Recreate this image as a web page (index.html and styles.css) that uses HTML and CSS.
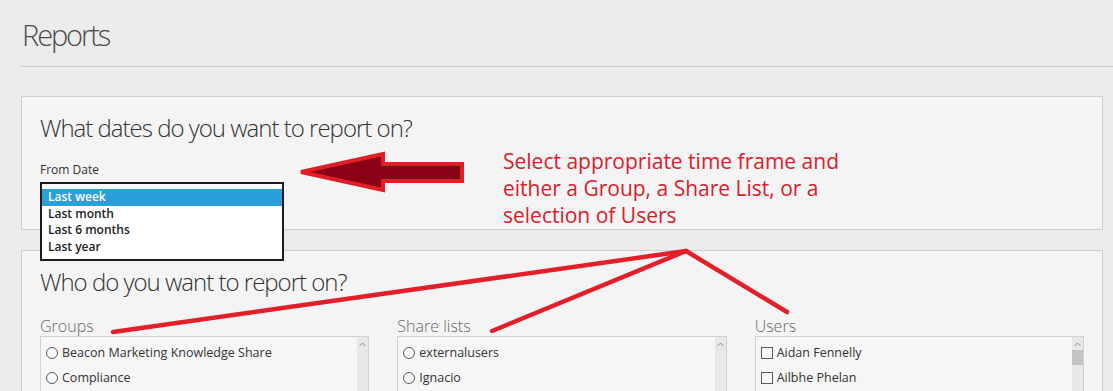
FILE: index.html
```html
<!DOCTYPE html>
<html lang="en">
<head>
    <meta charset="UTF-8">
    <meta name="viewport" content="width=device-width, initial-scale=1.0">
    <title>Reports</title>
    <link rel="stylesheet" href="styles.css">
</head>
<body>
    <div class="page">
        <header class="page-header">
            <h1>Reports</h1>
        </header>

        <section class="panel">
            <h2>What dates do you want to report on?</h2>
            <label class="field-label">From Date</label>
            <div class="select">
                <ul class="select-popup">
                    <li class="selected">Last week</li>
                    <li>Last month</li>
                    <li>Last 6 months</li>
                    <li>Last year</li>
                </ul>
            </div>
        </section>

        <section class="panel panel-who">
            <h2>Who do you want to report on?</h2>
            <div class="pickers">
                <div class="picker">
                    <div class="picker-label">Groups</div>
                    <div class="listbox">
                        <ul class="options">
                            <li><span class="radio"></span>Beacon Marketing Knowledge Share</li>
                            <li><span class="radio"></span>Compliance</li>
                        </ul>
                        <div class="scrollbar">
                            <svg class="scroll-up" width="7" height="5" viewBox="0 0 7 5"><path d="M0.5 4L3.5 1L6.5 4" fill="none" stroke="#8a8a8a" stroke-width="1"/></svg>
                        </div>
                    </div>
                </div>
                <div class="picker">
                    <div class="picker-label">Share lists</div>
                    <div class="listbox">
                        <ul class="options">
                            <li><span class="radio"></span>externalusers</li>
                            <li><span class="radio"></span>Ignacio</li>
                        </ul>
                        <div class="scrollbar">
                            <svg class="scroll-up" width="7" height="5" viewBox="0 0 7 5"><path d="M0.5 4L3.5 1L6.5 4" fill="none" stroke="#8a8a8a" stroke-width="1"/></svg>
                        </div>
                    </div>
                </div>
                <div class="picker">
                    <div class="picker-label">Users</div>
                    <div class="listbox">
                        <ul class="options">
                            <li><span class="check"></span>Aidan Fennelly</li>
                            <li><span class="check"></span>Ailbhe Phelan</li>
                        </ul>
                        <div class="scrollbar">
                            <svg class="scroll-up" width="7" height="5" viewBox="0 0 7 5"><path d="M0.5 4L3.5 1L6.5 4" fill="none" stroke="#8a8a8a" stroke-width="1"/></svg>
                            <div class="scroll-thumb"></div>
                        </div>
                    </div>
                </div>
            </div>
        </section>
    </div>

    <!-- annotation drawn over the screenshot -->
    <svg class="markup" width="1113" height="391" viewBox="0 0 1113 391">
        <polygon points="301,172 383,154 383,164 462,164 462,181 383,181 383,190" fill="#8a0014" stroke="#e11d25" stroke-width="4" stroke-linejoin="miter"/>
        <g stroke="#e3202a" stroke-width="4.5" stroke-linecap="round" fill="none">
            <line x1="686" y1="251" x2="113" y2="332"/>
            <line x1="686" y1="251" x2="492" y2="331"/>
            <line x1="686" y1="251" x2="787" y2="312"/>
        </g>
    </svg>
    <p class="markup-note">Select appropriate time frame and<br>either a Group, a Share List, or a<br>selection of Users</p>
</body>
</html>
```

FILE: styles.css
```css
* {
    box-sizing: border-box;
    margin: 0;
    padding: 0;
}

body {
    font-family: 'Open Sans', 'Liberation Sans', sans-serif;
    background-color: #ececec;
    color: #333;
    position: relative;
    overflow: hidden;
    height: 391px;
}

.page {
    padding-left: 21px;
}

.page-header {
    padding-top: 21px;
    padding-bottom: 17px;
    border-bottom: 1px solid #cdcdcd;
}

h1 {
    font-size: 29px;
    font-weight: 300;
    line-height: 28px;
    letter-spacing: -2.1px;
    color: #4a4a4a;
    padding-left: 1px;
}

.panel {
    margin: 29px 10px 0 0;
    background-color: #f4f4f4;
    border: 1px solid #cfcfcf;
    padding: 16px 18px 19px;
}

.panel h2 {
    font-size: 24px;
    font-weight: 300;
    line-height: 30px;
    letter-spacing: -1px;
    color: #333;
}

.field-label {
    display: block;
    margin-top: 19px;
    font-size: 12px;
    line-height: 16px;
    color: #333;
}

.select {
    position: relative;
    margin-top: 4px;
    width: 244px;
    height: 28px;
}

.select-popup {
    position: absolute;
    top: 0;
    left: 0;
    width: 244px;
    list-style: none;
    background-color: #fff;
    border: 2px solid #1b1b1b;
    padding: 5px 0 3px;
    z-index: 2;
}

.select-popup li {
    font-size: 12px;
    font-weight: 600;
    line-height: 16.7px;
    padding-left: 6px;
    color: #222;
}

.select-popup li.selected {
    background-color: #2a9fd9;
    color: #fff;
}

.panel-who {
    margin-top: 20px;
    padding-top: 16px;
}

.pickers {
    display: grid;
    grid-template-columns: repeat(3, 1fr);
    gap: 28px;
    margin-top: 20px;
}

.picker-label {
    font-size: 16px;
    font-weight: 300;
    line-height: 19px;
    color: #6a6a6a;
}

.listbox {
    display: flex;
    height: 150px;
    border: 1px solid #d2d2d2;
    background-color: #f6f6f6;
}

.options {
    flex: 1;
    list-style: none;
    padding: 3px 5px 0;
}

.options li {
    display: flex;
    align-items: center;
    gap: 4px;
    height: 25px;
    font-size: 12.5px;
    color: #333;
}

.radio,
.check {
    width: 12px;
    height: 12px;
    flex-shrink: 0;
    border: 1px solid #5a5a5a;
    background-color: #fafafa;
}

.radio {
    border-radius: 50%;
}

.scrollbar {
    width: 11px;
    background-color: #e8e8e8;
    display: flex;
    flex-direction: column;
    align-items: center;
}

.scroll-up {
    margin-top: 5px;
}

.scroll-thumb {
    align-self: stretch;
    height: 15px;
    margin-top: 3px;
    background-color: #c3c3c3;
}

/* annotation layer */
.markup {
    position: absolute;
    top: 0;
    left: 0;
    pointer-events: none;
    z-index: 3;
}

.markup-note {
    position: absolute;
    top: 148px;
    left: 503px;
    font-size: 21px;
    line-height: 27px;
    color: #d7202b;
    z-index: 3;
}
```
